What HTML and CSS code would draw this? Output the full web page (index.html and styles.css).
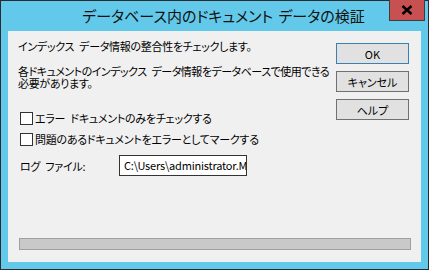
FILE: index.html
```html
<!DOCTYPE html>
<html lang="ja">
<head>
<meta charset="utf-8">
<link rel="stylesheet" href="styles.css">
</head>
<body>
<div class="window">
  <div class="titlebar">
    <div class="title">データベース内のドキュメント データの検証</div>
    <div class="close"><svg width="12" height="10" viewBox="0 0 12 10"><path d="M1.5 1 L10.5 9 M10.5 1 L1.5 9" stroke="#000" stroke-width="2.4"/></svg></div>
  </div>
  <div class="client">
    <div class="top">
      <div class="main">
        <p class="line l1">インデックス データ情報の整合性をチェックします。</p>
        <p class="line l2">各ドキュメントのインデックス データ情報をデータベースで使用できる</p>
        <p class="line l3">必要があります。</p>
        <div class="check c1"><span class="box"></span><span>エラー ドキュメントのみをチェックする</span></div>
        <div class="check c2"><span class="box"></span><span>問題のあるドキュメントをエラーとしてマークする</span></div>
        <div class="logrow"><span class="loglabel">ログ ファイル:</span><div class="input">C:\Users\administrator.MyDomain\Documents\log.txt</div></div>
      </div>
      <div class="buttons">
        <div class="btn default">OK</div>
        <div class="btn">キャンセル</div>
        <div class="btn">ヘルプ</div>
      </div>
    </div>
    <div class="progress"></div>
  </div>
</div>
</body>
</html>
```
FILE: styles.css
```css
* { box-sizing: border-box; }
html, body { margin: 0; padding: 0; }
body {
  width: 429px; height: 270px; overflow: hidden;
  font-family: "Noto Sans CJK JP", "Noto Sans", sans-serif;
  font-feature-settings: "palt";
  color: #000;
}
.window {
  width: 429px; height: 270px;
  background: #63c9ea;
  border: 1px solid #2b2b2b;
  display: flex; flex-direction: column;
}
.titlebar {
  height: 30px; position: relative;
  display: flex; justify-content: center; align-items: center;
}
.title {
  font-size: 15px; line-height: 20px; margin-top: -1px; margin-left: 18px;
  word-spacing: 2px; color: #111;
}
.close {
  position: absolute; top: -1px; right: 3px;
  width: 36px; height: 21px;
  background: #c75050; border: 1px solid #3d3d3d; border-top: none;
  display: flex; justify-content: center; align-items: center;
}
.client {
  flex: 1; margin: 0 7px 7px 7px;
  background: #f0f0f0;
  display: flex; flex-direction: column;
  padding: 0 10px 12px 11px;
}
.top { display: flex; flex: 1; }
.main { flex: 1; min-width: 0; padding-top: 9px; }
.line { margin: 0; font-size: 11px; letter-spacing: -0.3px; word-spacing: 3px; line-height: 12px; height: 12px; white-space: nowrap; margin-left: -1px; }
.l2 { margin-top: 13px; letter-spacing: -0.5px; }
.l3 { margin-top: 0; }
.check { display: flex; align-items: center; font-size: 11px; letter-spacing: -0.25px; word-spacing: 3px; line-height: 15px; white-space: nowrap; margin-left: 1px; }
.c1 { margin-top: 22px; }
.c2 { margin-top: 6px; }
.box { width: 13px; height: 13px; border: 1px solid #333; background: #fff; margin-right: 2px; flex: none; }
.logrow { display: flex; align-items: center; margin-top: 8px; margin-left: 1px; }
.loglabel { font-size: 11px; letter-spacing: -0.25px; word-spacing: 3px; width: 99px; flex: none; }
.input {
  width: 128px; height: 21px; background: #fff; border: 1px solid #333;
  font-size: 11px; letter-spacing: -0.2px; line-height: 19px; padding-left: 4px;
  white-space: nowrap; overflow: hidden; font-feature-settings: normal;
}
.buttons { flex: none; display: flex; flex-direction: column; gap: 7px; padding-top: 12px; margin-right: 2px; }
.btn {
  width: 73px; height: 21px; background: #e1e1e1; border: 1px solid #707070;
  font-size: 11px; display: flex; justify-content: center; align-items: center;
}
.btn.default { border-color: #3c7fb1; }
.progress { height: 12px; background: #c9c9c9; border: 1px solid #a0a0a0; }
```
